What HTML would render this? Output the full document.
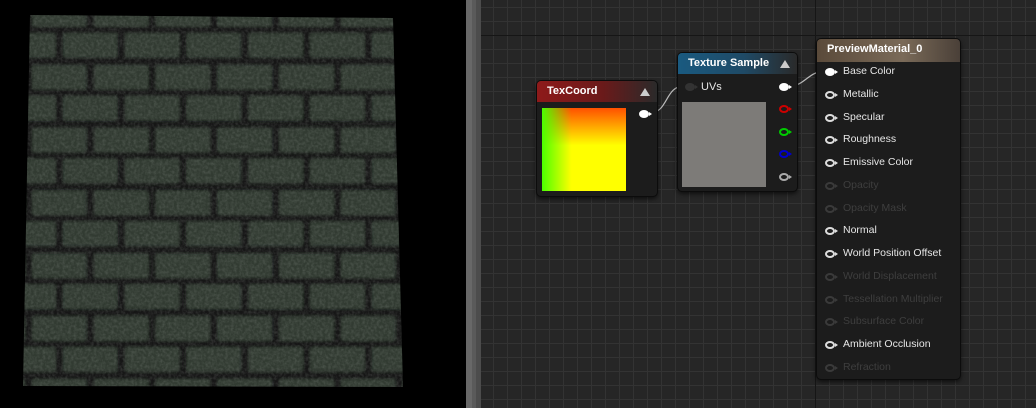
<!DOCTYPE html>
<html><head><meta charset="utf-8"><style>
*{margin:0;padding:0;box-sizing:border-box}
body{width:1036px;height:408px;background:#000;overflow:hidden;position:relative;font-family:"Liberation Sans",sans-serif}
.graph{position:absolute;left:481px;top:0;width:555px;height:408px;background-color:#262626;
background-image:linear-gradient(#161616,#161616),linear-gradient(#161616,#161616),
linear-gradient(90deg,#333 1px,transparent 1px),linear-gradient(#333 1px,transparent 1px);
background-size:1px 408px,555px 1px,14px 14px,14px 14px;
background-position:334px 0,0 35px,12px 0,0 7px;background-repeat:no-repeat,no-repeat,repeat,repeat}
.div1{position:absolute;left:466px;top:0;width:6px;height:408px;background:#686868}
.div2{position:absolute;left:472px;top:0;width:4px;height:408px;background:#5a5a5a}
.div3{position:absolute;left:476px;top:0;width:5px;height:408px;background:#4c4c4c}
.node{position:absolute;background:#1c1c1c;border:1px solid #0c0c0c;border-radius:5px;box-shadow:0 2px 4px rgba(0,0,0,.6);color:#e6e6e6;font-size:11px}
.hdr{height:21px;border-radius:4px 4px 0 0;font-weight:bold;font-size:11px;line-height:21px;padding-left:10px;color:#fff;position:relative}
.tri{position:absolute;right:7px;top:7px;width:0;height:0;border-left:5px solid transparent;border-right:5px solid transparent;border-bottom:8px solid #ccc}
.pin{position:absolute;width:10px;height:8px;border-radius:50%;border:2px solid #ddd}
.pin.f{background:#fff;border-color:#fff}
.pin:after{content:"";position:absolute;right:-5px;top:0;border-top:2px solid transparent;border-bottom:2px solid transparent;border-left:3px solid currentColor}
.row{position:absolute;left:0;height:14px;font-size:10.5px}
.row .pin{left:8px;top:3px;color:#ddd}
.row span{position:absolute;left:26px;top:0;white-space:nowrap}
.dim span{color:#3e3e3e}.dim .pin{border-color:#3a3a3a;color:#3a3a3a}
</style></head><body>
<svg width="466" height="408" style="position:absolute;left:0;top:0">
<defs>
<pattern id="b" width="60" height="61" patternUnits="userSpaceOnUse" x="2" y="0">
<rect width="60" height="61" fill="#141714"/>
<rect x="2" y="2" width="53" height="24" rx="2" fill="#323a33"/>
<rect x="32" y="33" width="53" height="24" rx="2" fill="#323a33"/>
<rect x="-28" y="33" width="53" height="24" rx="2" fill="#323a33"/>
</pattern>
<filter id="bl"><feGaussianBlur stdDeviation="1.2"/></filter>
<filter id="n" x="0" y="0" width="100%" height="100%"><feTurbulence type="fractalNoise" baseFrequency="0.35" numOctaves="3" seed="3"/><feColorMatrix type="matrix" values="0 0 0 0 0.5  0 0 0 0 0.55  0 0 0 0 0.5  0.9 0 0 0 -0.3"/></filter>
<clipPath id="c"><polygon points="30,15 393,18 403,387 23,386"/></clipPath>
</defs>
<g clip-path="url(#c)">
<rect x="0" y="0" width="466" height="408" fill="url(#b)" transform="translate(-3,-32) scale(1.03,1.03)" filter="url(#bl)"/>
<rect x="0" y="0" width="466" height="408" filter="url(#n)" opacity="0.35"/>
</g>
</svg>
<div class="div1"></div><div class="div2"></div><div class="div3"></div>
<div class="graph"></div>
<svg width="1036" height="408" style="position:absolute;left:0;top:0">
<path d="M650 113 C668 113,665 86,684 86" stroke="#bbb" stroke-width="1.2" fill="none"/>
<path d="M790 86 C805 86,808 71,826 71" stroke="#bbb" stroke-width="1.2" fill="none"/>
</svg>
<div class="node" style="left:536px;top:80px;width:122px;height:117px">
<div class="hdr" style="background:linear-gradient(90deg,#8e1a1a,#6a1a1a 55%,#2a2a2a)">TexCoord<div class="tri"></div></div>
<div style="position:absolute;left:5px;top:27px;width:84px;height:83px;background:linear-gradient(90deg,#4cff00,rgba(255,255,0,0) 35%),linear-gradient(180deg,#ff5000,#ffff00 45%);background-color:#ff0"></div>
<div class="pin f" style="left:102px;top:29px;color:#fff"></div>
</div>
<div class="node" style="left:677px;top:52px;width:121px;height:140px">
<div class="hdr" style="background:linear-gradient(90deg,#1a5a80,#1f4a66 55%,#2a2a2a)">Texture Sample<div class="tri"></div></div>
<div class="pin" style="left:7px;top:30px;background:#333;border-color:#333;color:#333"></div>
<span style="position:absolute;left:23px;top:28px;font-size:11px">UVs</span>
<div style="position:absolute;left:4px;top:49px;width:84px;height:85px;background:#7d7b78"></div>
<div class="pin f" style="left:101px;top:30px;color:#fff"></div>
<div class="pin" style="left:101px;top:52px;border-color:#c00;color:#c00"></div>
<div class="pin" style="left:101px;top:75px;border-color:#0c0;color:#0c0"></div>
<div class="pin" style="left:101px;top:97px;border-color:#00c;color:#00c"></div>
<div class="pin" style="left:101px;top:120px;border-color:#aaa;color:#aaa"></div>
</div>
<div class="node" style="left:816px;top:38px;width:145px;height:342px">
<div class="hdr" style="height:23px;line-height:20px;background:linear-gradient(90deg,#5a4a3a,#7a6a58 60%,#4a4038)">PreviewMaterial_0</div>
<div class="row" style="top:26px"><div class="pin f" style="color:#fff"></div><span>Base Color</span></div>
<div class="row" style="top:49px"><div class="pin"></div><span>Metallic</span></div>
<div class="row" style="top:72px"><div class="pin"></div><span>Specular</span></div>
<div class="row" style="top:94px"><div class="pin"></div><span>Roughness</span></div>
<div class="row" style="top:117px"><div class="pin"></div><span>Emissive Color</span></div>
<div class="row dim" style="top:140px"><div class="pin"></div><span>Opacity</span></div>
<div class="row dim" style="top:163px"><div class="pin"></div><span>Opacity Mask</span></div>
<div class="row" style="top:185px"><div class="pin"></div><span>Normal</span></div>
<div class="row" style="top:208px"><div class="pin"></div><span>World Position Offset</span></div>
<div class="row dim" style="top:231px"><div class="pin"></div><span>World Displacement</span></div>
<div class="row dim" style="top:254px"><div class="pin"></div><span>Tessellation Multiplier</span></div>
<div class="row dim" style="top:276px"><div class="pin"></div><span>Subsurface Color</span></div>
<div class="row" style="top:299px"><div class="pin"></div><span>Ambient Occlusion</span></div>
<div class="row dim" style="top:322px"><div class="pin"></div><span>Refraction</span></div>
</div>
</body></html>
